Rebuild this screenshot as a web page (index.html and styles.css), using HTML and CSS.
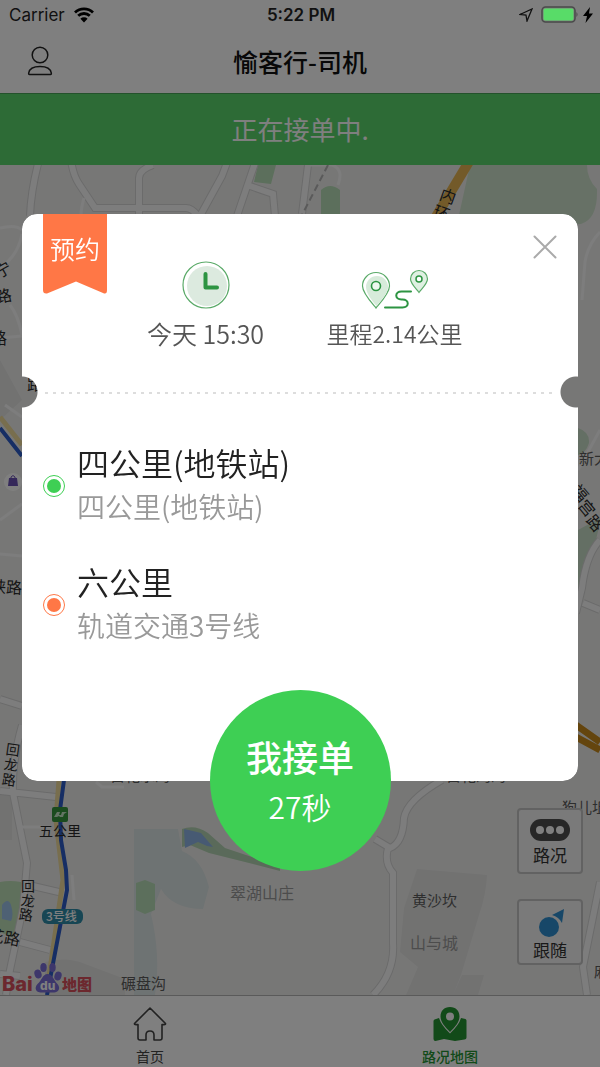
FILE: index.html
```html
<!DOCTYPE html>
<html lang="zh-CN">
<head>
    <meta charset="UTF-8">
    <meta name="viewport" content="width=device-width, initial-scale=1.0">
    <title>愉客行-司机</title>
    <link rel="stylesheet" href="styles.css">
</head>
<body>
    <div class="app">
        <div class="status-bar">
            <div class="status-left">
                <span>Carrier</span>
                <svg width="22" height="16" viewBox="0 0 22 16">
                    <path d="M2 5.5a13 13 0 0 1 18 0M5.2 8.800a8.400 8.400 0 0 1 11.600 0" fill="none" stroke="#000" stroke-width="2.800"/>
                    <path d="M11 15.500l-3.600-3.700a5.200 5.200 0 0 1 7.200 0z"/>
                </svg>
            </div>
            <strong class="status-time">5:22 PM</strong>
            <div class="status-right">
                <svg width="14" height="14" viewBox="0 0 14 14">
                    <path d="M1 6.500L13 1 8 13 7 7z" fill="none" stroke="#111" stroke-width="1.300"/>
                </svg>
                <svg width="38" height="18" viewBox="0 0 38 18">
                    <rect x="1" y="1" width="33" height="15" rx="3.500" fill="none" stroke="#4a4a4a" stroke-width="1.500"/>
                    <rect x="2.500" y="2.500" width="30" height="12" rx="2" fill="#58dc68"/>
                    <path d="M35.500 6v5q2-2.500 0-5z" fill="#444"/>
                </svg>
                <svg width="10" height="16" viewBox="0 0 10 16">
                    <path d="M7 0L0 9h4L2.500 16 10 6.500H6z"/>
                </svg>
            </div>
        </div>

        <header class="navbar">
            <button type="button" class="icon-btn" aria-label="个人中心">
                <svg width="26" height="30" viewBox="0 0 26 30">
                    <g fill="none" stroke="#222" stroke-width="1.500">
                        <circle cx="13" cy="9" r="7.800"/>
                        <path d="M2.500 28.500h21q1 0 .8-1.500C23.500 22 20 20.500 13 20.500S2.500 22 1.700 27q-.2 1.500.8 1.500z"/>
                    </g>
                </svg>
            </button>
            <h1>愉客行-司机</h1>
        </header>

        <div class="banner">正在接单中.</div>

        <main class="map">
            <svg class="map-canvas" viewBox="0 165 600 830" preserveAspectRatio="xMidYMid slice" role="img" aria-label="地图">
                <rect y="165" width="600" height="830" fill="#efefed"/>

                <!-- land and parks -->
                <path d="M22 400L0 420v-60zM0 790h12v50H0zM45 962q22-6 40 2l40 15v16H45z" fill="#e4e4e3"/>
                <path d="M470 165h117q0 14 10 24 1 30-16 35h-124z" fill="#cfe3cd"/>
                <path d="M258 165h18l-5 19-17-2zM321 190q9-8 19 0v26h-19z" fill="#b9dfb8"/>
                <path d="M578 428q12 4 11 15-3 10-11 12zM578 530l22-12v5l-12 50-10 30z" fill="#c9dfc8"/>
                <path d="M0 882q10-2 21 0 6 22-3 58l-18-8z" fill="#bfe0b8"/>
                <path d="M2 905q6-8 9 0 3 10 0 16l-9-2z" fill="#9cc2e8"/>
                <path d="M134 829h44l4 22q20 8 27 36l-6 22q-30 0-42-20l-10 25q10 42 4 81h-21z" fill="#dde6e6"/>
                <path d="M136 883l9-3 10 4v26l-10 4-9-4z" fill="#b9dfb8"/>
                <path d="M182 829q13-5 26 4l17 15 30 10 25 8v5l-35-9-36-9-19-8-8 2z" fill="#b5d5b4"/>
                <path d="M184 829l9 2 8 2 12 14-6-1-9-4-13 6z" fill="#8fb4e6"/>
                <path d="M417 869l70 6q-1 20-8 40l-18 60-8 20h-47l12-28-18-15 4-44zM462 975h22l-6 20h-25z" fill="#e4e4e3"/>

                <!-- roads -->
                <g class="road-edge">
                    <path id="r1" d="M39 160Q31 190 30 216M71 160q2 15 8 24l16 24h91q6 0 12 8M139 216v-38q0-8 14-13M228 160l-6 16-22 40M256 160l-19 56M250 186l23 8 2 22M308 165l-6 49"/>
                    <path id="r2" d="M0 699l22 7M22 725q-10 35-9 68l14 70-4 45-13 62-4 25M0 791l56 6M33 886l30 7M20 942l30 8M0 974l20 2"/>
                    <path id="r3" d="M442 780q-35 20-38 38-1 25-14 30l-15-9M388 848q-4 15 5 25v70q2 30-20 52M600 540q-14 15-18 48l-6 25M583 603l17 7M600 882l-17 85 4 28"/>
                </g>
                <g class="road">
                    <use href="#r1"/>
                    <use href="#r2"/>
                    <use href="#r3"/>
                </g>
                <path class="lane" d="M0 228q16-4 22 2M0 268q18-12 22-34M10 305q8 10 12 30M0 338l22-2M5 405l17 12M0 520l22-16M0 554l22 2M84 198q-3 10-3 18M22 827h28M96 782l6 5h22M72 875l2 25M305 165h27q12 4 6 20M600 232q-12 12-15 30l-3 38M578 470l22-40"/>
                <path d="M328 165l-26 50" fill="none" stroke="#b5b5b5" stroke-width="2" stroke-dasharray="7 4"/>
                <path d="M470 160l-36 60" fill="none" stroke="#e6b552" stroke-width="10"/>
                <path d="M576 725l24 17M576 737l24 13" fill="none" stroke="#c98a1c" stroke-width="7"/>
                <path d="M0 417l22 28M59 780l-3 40 7 60-16 110" fill="none" stroke="#f0dc9c" stroke-width="5"/>
                <path d="M0 428l22 28M64 780l-4 30 1 30 5 30 1 20-20 105" fill="none" stroke="#2c5cc8" stroke-width="4"/>

                <!-- places -->
                <rect x="52" y="807" width="16" height="15" rx="2" fill="#37963c"/>
                <path d="M54 817l3-5h3l-1 3h2l1-3h5l-3 2-1 3h-3l-1-1-2 1z" fill="#c9e8c9"/>
                <rect x="42" y="909" width="41" height="15" rx="6" fill="#2f8da8"/>
                <circle cx="13" cy="482" r="9" fill="#fff"/>
                <path d="M9 478h8l1 8H8z" fill="#6a50b4"/>
                <path d="M11 479v-2q2-3 4 0v2" fill="none" stroke="#6a50b4"/>
                <g class="map-text map-text-road">
                    <text x="440" y="202" transform="rotate(20 448 196)">内</text>
                    <text x="434" y="219" transform="rotate(20 442 212)">环</text>
                    <text x="-5" y="276" transform="rotate(-30 2 270)">宁</text>
                    <text x="-4" y="302" transform="rotate(-12 4 298)">路</text>
                    <text x="-9" y="344">路</text>
                    <text x="27" y="390">路</text>
                    <text x="-10" y="593" transform="rotate(3 8 590)">峡路</text>
                    <text x="572" y="499" transform="rotate(50 580 493)">福</text>
                    <text x="579" y="514" transform="rotate(50 587 508)">宫</text>
                    <text x="587" y="529" transform="rotate(50 595 523)">路</text>
                    <text x="-12" y="943" transform="rotate(10 4 938)">花路</text>
                </g>
                <g class="map-text">
                    <text x="6" y="755" transform="rotate(8 13 750)">回</text>
                    <text x="4" y="770" transform="rotate(8 11 765)">龙</text>
                    <text x="2" y="785" transform="rotate(8 9 780)">路</text>
                    <text x="21" y="891">回</text>
                    <text x="21" y="906" transform="rotate(8 28 900)">龙</text>
                    <text x="19" y="920" transform="rotate(8 26 914)">路</text>
                    <text x="39" y="836">五公里</text>
                </g>
                <g class="map-text map-text-soft">
                    <text x="579" y="464">新大道</text>
                    <text x="110" y="781">自花水湾</text>
                    <text x="446" y="781">自花湾湾</text>
                    <text x="562" y="813">狗儿坵</text>
                    <text x="121" y="989">碾盘沟</text>
                    <text x="412" y="906">黄沙坎</text>
                    <text x="594" y="977">麻</text>
                </g>
                <g class="map-text map-text-area">
                    <text x="230" y="899">翠湖山庄</text>
                    <text x="410" y="949">山与城</text>
                </g>
                <text class="line-name" x="46" y="921">3号线</text>

                <!-- map provider logo -->
                <g fill="#7a6ed6">
                    <ellipse cx="38" cy="974" rx="3.500" ry="4.500" transform="rotate(-20 38 974)"/>
                    <ellipse cx="43.500" cy="967.500" rx="3.200" ry="4.500"/>
                    <ellipse cx="52.500" cy="967.500" rx="3.200" ry="4.500"/>
                    <ellipse cx="58" cy="976" rx="3.500" ry="4.500" transform="rotate(20 58 976)"/>
                    <path d="M47.500 974c5 0 6 6 10 10 4 5 0 9-4 8.500h-12c-5 .5-8-4-4-8.500 4-3 5-10 10-10z"/>
                </g>
                <text class="logo-text" x="2" y="991">Bai</text>
                <text class="logo-paw" x="40" y="990">du</text>
                <text class="logo-cn" x="62" y="990">地图</text>
            </svg>

            <div class="map-tools">
                <button type="button" class="map-btn">
                    <svg width="42" height="24" viewBox="0 0 42 24">
                        <rect x="1" y="1" width="40" height="22" rx="11" fill="#4e4e4e"/>
                        <g fill="#fff">
                            <circle cx="11" cy="12" r="4"/>
                            <circle cx="21" cy="12" r="4"/>
                            <circle cx="31" cy="12" r="4"/>
                        </g>
                    </svg>
                    <span>路况</span>
                </button>
                <button type="button" class="map-btn map-btn-follow">
                    <svg width="28" height="28" viewBox="0 0 28 28">
                        <circle cx="13" cy="18" r="10" fill="#2e8fd0"/>
                        <path d="M28 0L16 6q7 2 10 8z" fill="#2e8fd0"/>
                    </svg>
                    <span>跟随</span>
                </button>
            </div>
        </main>

        <nav class="tab-bar">
            <a href="#home" class="tab">
                <svg width="34" height="34" viewBox="0 0 34 34">
                    <path d="M17 1L1.500 16.500q-.5 1.500 3.500 1V31q0 2 2 2h6v-5q0-4 4-4t4 4v5h6q2 0 2-2V17.500q4 .5 3.500-1z" fill="none" stroke="#444" stroke-width="1.600" stroke-linejoin="round"/>
                </svg>
                <span>首页</span>
            </a>
            <a href="#map" class="tab active">
                <svg width="34" height="34" viewBox="0 0 34 34">
                    <path d="M.5 14q0-1 1-1.500L6 11q2 7 11 15.500Q26 18 28 11l4.500 1q1 .5 1 1.500v17q0 2-2 2l-9.500 1.500-11-2-8.500 2Q.5 34 .5 32z" fill="#259432"/>
                    <path d="M17 0c6 0 9.500 4 9.500 9.500C26.500 15 22 20 17 25 12 20 7.500 15 7.500 9.500 7.500 4 11 0 17 0zm0 5.500a4 4 0 1 0 0 8 4 4 0 0 0 0-8z" fill="#259432" fill-rule="evenodd"/>
                </svg>
                <span>路况地图</span>
            </a>
        </nav>
    </div>

    <div class="overlay">
        <section class="order" role="dialog" aria-label="预约订单">
            <div class="order-card">
                <div class="order-head">
                    <div class="ribbon">
                        <svg viewBox="0 0 64 80" preserveAspectRatio="none">
                            <path d="M0 0h64v76q0 5-4 3L33 67.500 4 79.500Q0 80 0 76z" fill="#ff7746"/>
                        </svg>
                        <span>预约</span>
                    </div>
                    <div class="info">
                        <svg width="48" height="48" viewBox="0 0 48 48">
                            <circle cx="24" cy="24" r="23" fill="#fff" stroke="#5aaa68" stroke-width="1.200"/>
                            <circle cx="25" cy="25" r="20" fill="#dceadf"/>
                            <path d="M23.500 13v13.500H35" fill="none" stroke="#2d9442" stroke-width="4" stroke-linecap="round" stroke-linejoin="round"/>
                        </svg>
                        <span class="info-time">今天 15:30</span>
                    </div>
                    <div class="info">
                        <svg width="68" height="48" viewBox="0 -4 68 48">
                            <path d="M15 43C10 37 1.500 28 1.500 21a13.500 13.500 0 0 1 27 0C28.500 28 20 37 15 43z" fill="#fff" stroke="#5aaa68" stroke-width="1.200"/>
                            <path d="M15.500 41C11 36 5 28 5 22a11 11 0 0 1 22 0C27 28 20 36 15.500 41z" fill="#d7ebda"/>
                            <circle cx="15" cy="21" r="4.500" fill="#eef8ef" stroke="#2d9442" stroke-width="1.600"/>
                            <path d="M58 27.500c-3-4-8.500-9-8.500-13.500a8.500 8.500 0 0 1 17 0c0 4.500-5.500 9.500-8.500 13.500z" fill="#dff0e2" stroke="#5aaa68" stroke-width="1.200"/>
                            <circle cx="58" cy="14" r="3" fill="#fff" stroke="#2d9442" stroke-width="1.500"/>
                            <path d="M24 42.500h17.500c7 0 7-8 0-8h-1c-7 0-7-8 0-8H50" fill="none" stroke="#2d9442" stroke-width="2" stroke-linecap="round"/>
                        </svg>
                        <span class="info-distance">里程2.14公里</span>
                    </div>
                    <button type="button" class="close-btn" aria-label="关闭">
                        <svg width="24" height="24" viewBox="0 0 24 24">
                            <path d="M1.500 1.500l21 21M22.500 1.500l-21 21" stroke="#aaa" stroke-width="2" stroke-linecap="round"/>
                        </svg>
                    </button>
                </div>
                <div class="divider"></div>
                <ul class="stops">
                    <li class="stop">
                        <span class="dot"></span>
                        <div>
                            <h2>四公里(地铁站)</h2>
                            <p>四公里(地铁站)</p>
                        </div>
                    </li>
                    <li class="stop stop-end">
                        <span class="dot"></span>
                        <div>
                            <h2>六公里</h2>
                            <p>轨道交通3号线</p>
                        </div>
                    </li>
                </ul>
            </div>
            <button type="button" class="accept-btn">
                <span class="accept-label">我接单</span>
                <span class="accept-time">27秒</span>
            </button>
        </section>
    </div>
</body>
</html>
```
FILE: styles.css
```css
* {
    margin: 0;
    padding: 0;
    box-sizing: border-box;
}

body {
    position: relative;
    font-family: 'Noto Sans CJK SC', sans-serif;
    color: #222;
}

button {
    border: none;
    background: none;
    font-family: inherit;
    color: inherit;
    cursor: pointer;
}

svg {
    display: block;
}

.app {
    display: flex;
    flex-direction: column;
    min-height: 100vh;
    background: #fff;
}

/* status bar, the system draws it over the dimmed page */
.status-bar {
    position: relative;
    z-index: 2;
    display: grid;
    grid-template-columns: 1fr auto 1fr;
    align-items: center;
    height: 30px;
    padding: 0 7px 0 9px;
    font-family: Inter, sans-serif;
    font-size: 17px;
    color: #111;
}

.status-left,
.status-right {
    display: flex;
    align-items: center;
    gap: 8px;
}

.status-right {
    justify-content: flex-end;
    gap: 4px;
}

.status-right svg:first-child {
    margin-right: 4px;
}

.status-time {
    font-size: 17px;
    font-weight: 600;
}

/* title */
.navbar {
    display: grid;
    grid-template-columns: 1fr auto 1fr;
    align-items: center;
    height: 63px;
    padding: 0 27px 2px;
}

.icon-btn {
    justify-self: start;
}

.navbar h1 {
    font-size: 25px;
    font-weight: 500;
    color: #111;
}

.banner {
    height: 72px;
    border-top: 1px solid #48a458;
    background: #5ad66c;
    color: #fff;
    font-size: 26px;
    line-height: 70px;
    text-align: center;
}

/* map */
.map {
    position: relative;
    flex: 1;
    min-height: 400px;
    overflow: hidden;
}

.map-canvas {
    position: absolute;
    width: 100%;
    height: 100%;
}

.road-edge,
.road {
    fill: none;
}

.road-edge {
    stroke: #d6d6d6;
    stroke-width: 8px;
}

.road {
    stroke: #fafafa;
    stroke-width: 6px;
}

/* the reused paths inherit the width of their own group */
.lane {
    fill: none;
    stroke: #fafafa;
    stroke-width: 3px;
}

.map-text {
    font-size: 14px;
    fill: #2a2a2a;
}

.map-text-road {
    font-size: 16px;
}

.map-text-soft {
    font-size: 15px;
    fill: #5c5c5c;
}

.map-text-area {
    font-size: 16px;
    fill: #999;
}

.line-name {
    font-size: 12px;
    font-weight: 500;
    fill: #fff;
}

.logo-text,
.logo-cn,
.logo-paw {
    font-family: Inter, 'Noto Sans CJK SC', sans-serif;
    font-size: 20px;
    font-weight: 800;
    fill: #d8505c;
}

.logo-cn {
    font-size: 15px;
}

.logo-paw {
    font-size: 12px;
    fill: #fff;
}

.map-tools {
    position: absolute;
    right: 17px;
    bottom: 30px;
    display: grid;
    gap: 25px;
}

.map-btn {
    display: flex;
    flex-direction: column;
    align-items: center;
    justify-content: flex-end;
    width: 66px;
    height: 66px;
    padding-bottom: 4px;
    border: 2px solid #c4c4c4;
    border-radius: 4px;
    background: #f4f4f4;
    font-size: 17px;
    line-height: 26px;
    color: #333;
}

.map-btn-follow {
    padding-bottom: 0;
}

/* bottom tabs */
.tab-bar {
    display: flex;
    height: 72px;
    border-top: 1px solid #b4b4b4;
}

.tab {
    flex: 1;
    display: flex;
    flex-direction: column;
    align-items: center;
    gap: 5px;
    padding-top: 11px;
    font-size: 14px;
    line-height: 20px;
    color: #444;
    text-decoration: none;
}

.tab.active {
    font-weight: 500;
    color: #259432;
}

/* order popup */
.overlay {
    position: absolute;
    inset: 0;
    z-index: 1;
    padding: 214px 22px 0;
    background: rgba(0, 0, 0, 0.5);
}

.order {
    display: flex;
    flex-direction: column;
    align-items: center;
}

/* ticket shape, a round notch on each side of the divider */
.order-card {
    width: 100%;
    min-height: 567px;
    border-radius: 15px;
    background: #fff;
    -webkit-mask-image: radial-gradient(circle at 0 178px, transparent 15px, #000 16px), radial-gradient(circle at calc(100% - 2px) 178px, transparent 15px, #000 16px);
    -webkit-mask-composite: source-in;
    mask-image: radial-gradient(circle at 0 178px, transparent 15px, #000 16px), radial-gradient(circle at calc(100% - 2px) 178px, transparent 15px, #000 16px);
    mask-composite: intersect;
}

.order-head {
    display: grid;
    grid-template-columns: 68px 1fr 1fr 68px;
    height: 178px;
    padding: 0 21px;
}

.ribbon {
    display: grid;
    width: 64px;
    height: 80px;
    color: #fff;
    font-size: 25px;
    font-weight: 350;
    line-height: 68px;
    text-align: center;
}

.ribbon svg,
.ribbon span {
    grid-area: 1 / 1;
    width: 100%;
}

.info {
    display: flex;
    flex-direction: column;
    align-items: center;
    gap: 6px;
    padding-top: 47px;
    color: #555;
    font-weight: 350;
    line-height: 36px;
    white-space: nowrap;
}

.info-time {
    font-size: 25px;
}

.info-distance {
    font-size: 23px;
}

.close-btn {
    align-self: start;
    justify-self: end;
    padding-top: 21px;
}

.divider {
    height: 2px;
    margin: 0 21px;
    background: repeating-linear-gradient(90deg, transparent 0 2px, #ddd 2px 5px, transparent 5px 8px);
}

.stops {
    display: grid;
    gap: 32px;
    padding: 46px 21px 0;
    list-style: none;
}

.stop {
    display: flex;
    align-items: center;
    gap: 12px;
}

.stop h2 {
    font-size: 32px;
    font-weight: 350;
    line-height: 45px;
    color: #222;
}

.stop p {
    font-size: 28px;
    font-weight: 350;
    line-height: 42px;
    color: #999;
}

.dot {
    width: 22px;
    height: 22px;
    margin-top: 4px;
    padding: 3px;
    border: 1px solid #3ecf54;
    border-radius: 50%;
    background: #3ecf54 content-box;
}

.stop-end .dot {
    border-color: #ff7746;
    background-color: #ff7746;
}

.accept-btn {
    position: relative;
    display: flex;
    flex-direction: column;
    align-items: center;
    justify-content: center;
    width: 181px;
    height: 181px;
    margin-top: -91px;
    border-radius: 50%;
    background: #3ecf54;
    color: #fff;
}

.accept-label {
    font-size: 36px;
    font-weight: 500;
    line-height: 50px;
}

.accept-time {
    font-size: 30px;
    font-weight: 350;
    line-height: 50px;
}
```
